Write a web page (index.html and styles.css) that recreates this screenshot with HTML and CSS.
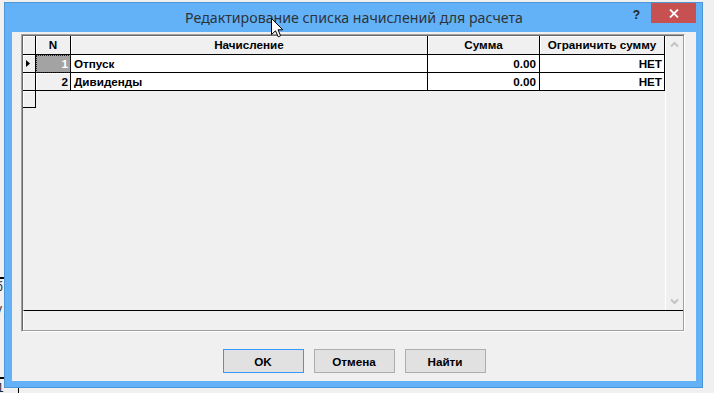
FILE: index.html
```html
<!DOCTYPE html>
<html lang="ru">
<head>
<meta charset="utf-8">
<title>Редактирование списка начислений для расчета</title>
<link rel="stylesheet" href="styles.css">
</head>
<body>
<div class="desk">
  <div class="bg-line bg-line-a"></div>
  <div class="bg-text bg-text-a">б</div>
  <div class="bg-text bg-text-b">у</div>
  <div class="bg-line bg-line-b"></div>
  <div class="bg-text bg-text-c">1</div>
  <div class="bg-vline"></div>

  <div class="window">
    <div class="titlebar">
      <div class="tb-side"></div>
      <div class="title">Редактирование списка начислений для расчета</div>
      <div class="tb-controls">
        <span class="help">?</span>
        <span class="close">
          <svg width="10" height="9" viewBox="0 0 10 9"><path d="M1 0.5 L9 8.5 M9 0.5 L1 8.5" stroke="#fff" stroke-width="1.8" fill="none"/></svg>
        </span>
      </div>
    </div>
    <div class="client">
      <div class="grid">
        <div class="grid-inner">
          <div class="grid-main">
            <div class="table">
              <div class="hrow">
                <div class="cell hcell c-ind"></div>
                <div class="cell hcell c-n">N</div>
                <div class="cell hcell c-name">Начисление</div>
                <div class="cell hcell c-sum">Сумма</div>
                <div class="cell hcell c-lim">Ограничить сумму</div>
              </div>
              <div class="row">
                <div class="cell ind c-ind"><svg width="4" height="7" viewBox="0 0 4 7"><path d="M0 0 L4 3.5 L0 7 Z" fill="#000"/></svg></div>
                <div class="cell ncell c-n selected">1</div>
                <div class="cell dcell c-name">Отпуск</div>
                <div class="cell dcell c-sum num">0.00</div>
                <div class="cell dcell c-lim num">НЕТ</div>
              </div>
              <div class="row">
                <div class="cell ind c-ind"></div>
                <div class="cell ncell c-n">2</div>
                <div class="cell dcell c-name">Дивиденды</div>
                <div class="cell dcell c-sum num">0.00</div>
                <div class="cell dcell c-lim num">НЕТ</div>
              </div>
              <div class="row row-new">
                <div class="cell ind c-ind"></div>
              </div>
            </div>
            <div class="vscroll">
              <svg class="chev" width="17" height="17" viewBox="0 0 17 17"><path d="M5 10.5 L8.5 7 L12 10.5" stroke="#c4c4c4" stroke-width="2" fill="none"/></svg>
              <svg class="chev" width="17" height="17" viewBox="0 0 17 17"><path d="M5 6.5 L8.5 10 L12 6.5" stroke="#c4c4c4" stroke-width="2" fill="none"/></svg>
            </div>
          </div>
          <div class="grid-footer"></div>
        </div>
      </div>
      <div class="buttons">
        <button class="btn btn-default">OK</button>
        <button class="btn">Отмена</button>
        <button class="btn">Найти</button>
      </div>
    </div>
  </div>

  <svg class="cursor" width="13" height="20" viewBox="0 0 13 20"><polygon points="0.5,0.5 0.5,16.5 4.5,12.8 7.2,18.8 9.6,17.8 7,11.8 11.8,11.8" fill="#fff" stroke="#000" stroke-width="1" stroke-linejoin="miter"/></svg>
</div>
</body>
</html>
```
FILE: styles.css
```css
html, body {
  margin: 0;
  padding: 0;
}
body {
  background: #f0f0f0;
  font-family: "Liberation Sans", Arial, sans-serif;
}
.desk {
  position: relative;
  width: 714px;
  height: 393px;
  overflow: hidden;
  background: #f0f0f0;
}
.bg-line {
  position: absolute;
  left: 0;
  width: 6px;
  height: 2px;
  background: #000;
}
.bg-line-a { top: 277px; }
.bg-line-b { top: 377px; }
.bg-text {
  position: absolute;
  left: -4px;
  font-size: 12px;
  line-height: 14px;
  color: #1a2a40;
}
.bg-text-a { top: 280px; }
.bg-text-b { top: 302px; }
.bg-text-c { top: 381px; left: -3px; }
.bg-vline {
  position: absolute;
  left: 18px;
  top: 388px;
  width: 1px;
  height: 5px;
  background: #000;
}

.window {
  position: absolute;
  left: 4px;
  top: 2px;
  width: 699px;
  height: 386px;
  box-sizing: border-box;
  background: #63b2f7;
  border: 1px solid #4d96d6;
  padding: 0 6px 6px 7px;
  display: flex;
  flex-direction: column;
  z-index: 1;
}
.titlebar {
  height: 29px;
  display: grid;
  grid-template-columns: 1fr auto 1fr;
  margin: 0 -6px 0 -7px;
  padding: 0 6px 0 7px;
}
.title {
  font-family: "Noto Sans", "Open Sans", sans-serif;
  font-size: 14.2px;
  line-height: 29px;
  color: #2e3338;
  white-space: nowrap;
}
.tb-controls {
  display: flex;
  justify-content: flex-end;
  align-items: flex-start;
}
.help {
  font: bold 12px "Liberation Sans", Arial, sans-serif;
  color: #222;
  margin-top: 5px;
  margin-right: 11px;
  line-height: 14px;
}
.close {
  width: 45px;
  height: 20px;
  background: #c75050;
  display: flex;
  align-items: center;
  justify-content: center;
}

.client {
  flex: 1;
  background: #f0f0f0;
  padding: 2px 11px 8px 9px;
  display: flex;
  flex-direction: column;
}
.grid {
  height: 298px;
  box-sizing: border-box;
  border: 1px solid;
  border-color: #a0a0a0 #ffffff #ffffff #a0a0a0;
}
.grid-inner {
  height: 100%;
  box-sizing: border-box;
  border: 1px solid;
  border-color: #696969 #a0a0a0 #a0a0a0 #696969;
  display: flex;
  flex-direction: column;
}
.grid-main {
  flex: 1;
  display: flex;
  min-height: 0;
}
.table {
  width: 642px;
  background: #f0f0f0;
}
.vscroll {
  flex: 1;
  border-left: 1px solid #fff;
  background: #f0f0f0;
  display: flex;
  flex-direction: column;
  justify-content: space-between;
}
.chev { display: block; }
.grid-footer {
  height: 20px;
  box-sizing: border-box;
  border-top: 1px solid #000;
  border-left: 1px solid #fff;
  background: #f0f0f0;
}

.hrow, .row {
  display: flex;
  box-sizing: border-box;
}
.hrow { height: 19px; }
.row { height: 18px; }
.cell {
  box-sizing: border-box;
  height: 100%;
  border-right: 1px solid #000;
  border-bottom: 1px solid #000;
  font-size: 11.7px;
  font-weight: bold;
  color: #000;
  white-space: nowrap;
  overflow: hidden;
}
.c-ind { width: 13px; }
.c-n { width: 35px; }
.c-name { width: 357px; }
.c-sum { width: 112px; }
.c-lim { width: 125px; }
.hcell {
  background: #f0f0f0;
  box-shadow: inset 1px 1px 0 #fff;
  text-align: center;
  line-height: 18px;
}
.ind {
  background: #f0f0f0;
  box-shadow: inset 1px 1px 0 #fff;
  display: flex;
  align-items: center;
  padding-left: 3px;
}
.ncell {
  background: #f0f0f0;
  box-shadow: inset 1px 1px 0 #fff;
  text-align: right;
  padding-right: 2px;
  line-height: 17px;
}
.ncell.selected {
  background: #a3a3a3;
  color: #fff;
  box-shadow: none;
  outline: 1px dotted #222;
  outline-offset: -1px;
}
.dcell {
  background: #fff;
  padding-left: 3px;
  line-height: 17px;
}
.dcell.num {
  text-align: right;
  padding-right: 3px;
}
.c-lim.num { padding-right: 2px; }
.row-new { height: 17px; }

.buttons {
  margin-top: 17px;
  padding-left: 2px;
  display: flex;
  justify-content: center;
  gap: 10px;
}
.btn {
  width: 81px;
  height: 24px;
  box-sizing: border-box;
  border: 1px solid #adadad;
  background: #e1e1e1;
  font: bold 11.7px "Liberation Sans", Arial, sans-serif;
  color: #000;
  padding: 0;
  margin: 0;
}
.btn-default {
  border-color: #3399ff;
}

.cursor {
  position: absolute;
  left: 271px;
  top: 18px;
  z-index: 5;
}
```
